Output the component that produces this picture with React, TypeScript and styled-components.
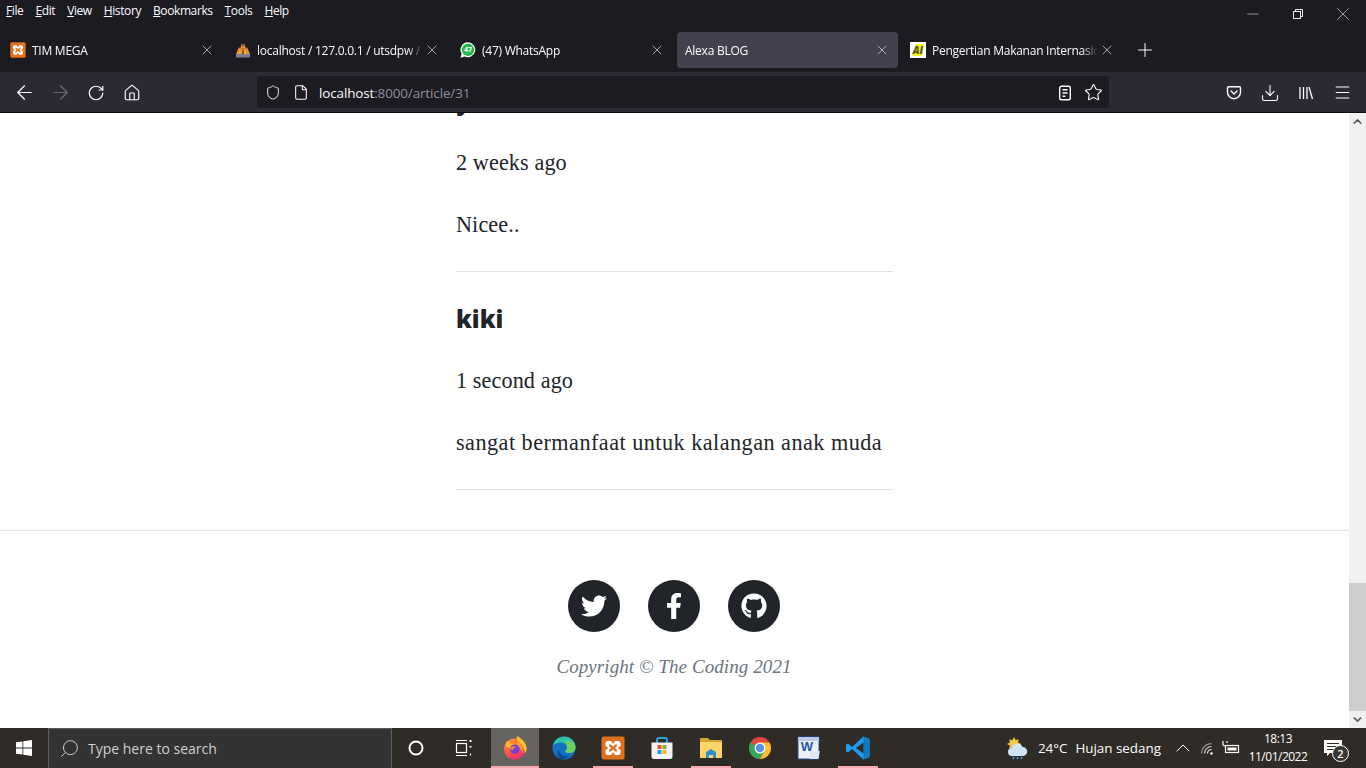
import React from "react";
import styled, { createGlobalStyle } from "styled-components";
import { ArrowLeft, ArrowRight, RotateCw, House, Shield, File, Star, Download, Menu, X, Plus, Minus, Search, ChevronUp, ChevronDown } from "lucide-react";
import { FaTwitter, FaFacebookF, FaGithub } from "react-icons/fa";

const Global = createGlobalStyle`
  html, body { margin: 0; padding: 0; width: 1366px; height: 768px; overflow: hidden; background: #fff; }
  * { box-sizing: border-box; }
`;

const Shell = styled.div`
  width: 1366px; height: 768px; display: flex; flex-direction: column; overflow: hidden;
  font-family: "Open Sans", "Noto Sans", sans-serif;
`;

/* ---------- browser chrome ---------- */
const TitleBar = styled.div`
  height: 32px; background: #1c1b22; color: #fbfbfe; display: flex; align-items: flex-start; flex: none;
`;
const MenuList = styled.div`
  display: flex; gap: 12px; padding: 2px 0 0 6px; font-size: 12px; line-height: 17px; letter-spacing: -0.4px;
`;
const MenuItem = styled.span`
  &::first-letter { text-decoration: underline; }
  display: inline-block;
`;
const WindowButtons = styled.div`
  margin-left: auto; display: flex; padding-top: 2px; padding-right: 1px;
`;
const WindowButton = styled.div`
  width: 45px; height: 24px; display: flex; align-items: center; justify-content: center; color: #e8e8ea;
`;
const TabBar = styled.div`
  height: 40px; background: #1c1b22; display: flex; align-items: flex-start; gap: 4px; padding-left: 2px; flex: none;
`;
const Tab = styled.div<{ $active?: boolean }>`
  width: 221px; height: 36px; display: flex; align-items: center; padding: 0 8px; border-radius: 4px;
  background: ${(p) => (p.$active ? "#42414d" : "transparent")};
  color: #fbfbfe; font-size: 12px; position: relative;
`;
const Favicon = styled.span`
  width: 16px; height: 16px; flex: none; margin-right: 6px; display: flex;
`;
const TabTitle = styled.span`
  flex: 1; min-width: 0; white-space: nowrap; overflow: hidden; letter-spacing: -0.25px;
  mask-image: linear-gradient(to right, #000 calc(100% - 16px), transparent);
`;
const TabClose = styled.span`
  width: 16px; height: 16px; flex: none; display: flex; align-items: center; justify-content: center; color: #e8e8ea; margin-left: 1px;
`;
const NewTab = styled.div`
  width: 36px; height: 36px; display: flex; align-items: center; justify-content: center; color: #fbfbfe;
`;
const NavBar = styled.div`
  height: 41px; background: #2b2a33; border-bottom: 1px solid #0c0c0d; display: flex; align-items: flex-start; padding: 4px 6px 0; flex: none;
`;
const NavButton = styled.div<{ $dim?: boolean }>`
  width: 36px; height: 32px; padding-top: 1px; display: flex; align-items: center; justify-content: center;
  color: ${(p) => (p.$dim ? "#6b6a72" : "#fbfbfe")};
`;
const NavGroup = styled.div`
  display: flex; flex: none;
`;
const AddressBar = styled.div`
  width: 852px; height: 32px; margin: 0 auto; padding: 1px 6px 0 8px; background: #1c1b22; border-radius: 4px; display: flex; align-items: center;
  color: #fbfbfe; font-size: 13.4px;
`;
const AddressIcon = styled.span`
  width: 16px; height: 20px; display: flex; flex: none; align-items: center; justify-content: center; margin-right: 12px;
  &:nth-child(2) { margin-right: 10px; }
`;
const Host = styled.span`
  color: #fbfbfe; letter-spacing: -0.1px;
`;
const UrlRest = styled.span`
  color: #8f8f9d; letter-spacing: -0.1px;
`;
const AddressEnd = styled.div`
  margin-left: auto; display: flex; gap: 11px; align-items: center;
`;

/* ---------- page ---------- */
const Viewport = styled.div`
  flex: 1; min-height: 0; display: flex; background: #fff; overflow: hidden;
`;
const Page = styled.div`
  flex: 1; min-width: 0; overflow: hidden; color: #212529;
  font-family: "Liberation Serif", "DejaVu Serif", serif;
`;
const Column = styled.div`
  width: 437px; margin: -27px auto 0;
`;
const Comment = styled.article`
  border-bottom: 1px solid #e1e2e3; margin-bottom: 32px;
  &:last-child { margin-bottom: 0; }
`;
const Author = styled.h3`
  margin: 0 0 31px; font-family: "Open Sans", sans-serif; font-weight: 800; font-size: 24px; line-height: 30px; color: #212529;
`;
const Line = styled.p<{ $tracking?: number }>`
  margin: 0 0 30px; font-size: 22.2px; line-height: 32px; letter-spacing: ${(p) => p.$tracking ?? 0.1}px;
`;
const Footer = styled.footer`
  margin-top: 40px; padding: 49px 1px 0 0; border-top: 1px solid #e1e2e3; display: flex; flex-direction: column; align-items: center;
`;
const Socials = styled.div`
  display: flex; gap: 28px;
`;
const Social = styled.div`
  width: 52px; height: 52px; border-radius: 50%; background: #212529; color: #fff; display: flex; align-items: center; justify-content: center; font-size: 26px;
`;
const Copyright = styled.div`
  margin-top: 19px; font-style: italic; font-size: 19px; line-height: 32px; color: #6c757d; letter-spacing: 0.08px;
`;
const Scrollbar = styled.div`
  width: 17px; flex: none; background: #f0f0f0; display: flex; flex-direction: column; color: #606060;
`;
const ScrollArrow = styled.div`
  height: 17px; flex: none; display: flex; align-items: center; justify-content: center;
`;
const ScrollTrack = styled.div`
  flex: 1; display: flex; flex-direction: column; justify-content: flex-end;
`;
const ScrollThumb = styled.div`
  height: 128px; background: #cdcdcd;
`;

/* ---------- taskbar ---------- */
const Taskbar = styled.div`
  height: 40px; flex: none; background: #2f2b26; display: flex; align-items: stretch; color: #fff; font-size: 14px;
`;
const Start = styled.div`
  width: 48px; display: flex; align-items: center; justify-content: center;
`;
const SearchBox = styled.div`
  width: 344px; background: #333333; border: 1px solid #5c5c5c; border-bottom: none; display: flex; align-items: center; padding-left: 10px; gap: 8px; color: #cfcfcf; font-size: 14px;
`;
const SearchGlass = styled(Search)`
  transform: scaleX(-1);
`;
const SystemCell = styled.div`
  width: 48px; display: flex; align-items: center; justify-content: center;
`;
const Apps = styled.div`
  display: flex; gap: 1px; margin-left: 3px;
`;
const AppCell = styled.div<{ $active?: boolean; $open?: boolean }>`
  width: 48px; display: flex; align-items: center; justify-content: center; position: relative;
  background: ${(p) => (p.$active ? "#666461" : "transparent")};
  &::after {
    content: ""; position: absolute; bottom: 0; height: 2px; background: #f5a8ae;
    left: ${(p) => (p.$active ? "0" : "4px")}; right: ${(p) => (p.$active ? "0" : "4px")};
    display: ${(p) => (p.$active || p.$open ? "block" : "none")};
  }
`;
const Tray = styled.div`
  margin-left: auto; padding-right: 11px; display: flex; align-items: center; font-size: 13.4px; color: #fff;
`;
const Weather = styled.div`
  display: flex; align-items: center; margin-right: 10px;
  svg { margin-right: 9px; }
`;
const WeatherTemp = styled.span`
  margin-right: 8px;
`;
const TrayIcon = styled.span`
  width: 24px; display: flex; align-items: center; justify-content: center;
`;
const Clock = styled.div`
  width: 62px; margin-left: 4px; text-align: center; font-size: 12px; line-height: 18px; letter-spacing: -0.5px;
`;
const Notify = styled.div`
  width: 44px; height: 40px; margin-left: 2px; display: flex; align-items: center; justify-content: center; position: relative;
`;
const NotifyBadge = styled.span`
  position: absolute; right: 6px; bottom: 6px; width: 17px; height: 17px; border-radius: 50%; background: #3a3631; border: 1px solid #fff;
  font-size: 11px; font-weight: 600; display: flex; align-items: center; justify-content: center; line-height: 1;
`;

/* ---------- drawn icons ---------- */
const XamppIcon = ({ size = 16 }: { size?: number }) => (
  <svg width={size} height={size} viewBox="0 0 24 24">
    <rect x="0.5" y="0.5" width="23" height="23" rx="2" fill="#e0721f" />
    <path d="M7 5h3l2 3 2-3h3a2.5 2.5 0 0 1 2.5 2.5V10l-3 2 3 2v2.5A2.5 2.5 0 0 1 17 19h-3l-2-3-2 3H7a2.5 2.5 0 0 1-2.5-2.5V14l3-2-3-2V7.500A2.500 2.500 0 0 1 7 5z" fill="#fff" />
    <path d="M8 8.500h2l2 2 2-2h2V10l-2 2 2 2v1.500h-2l-2-2-2 2H8V14l2-2-2-2z" fill="#e0721f" />
  </svg>
);
const PmaIcon = () => (
  <svg width="16" height="16" viewBox="0 0 16 16">
    <path d="M1 12 4 5l1 2 2-6 1 4 1-4 2 6 1-2 3 7z" fill="#e8912c" />
    <path d="M7.400 12 8 4l.6 8z" fill="#1c1b22" />
    <path d="M4 12 5 8l.6 4zM11 12l-1-4-.6 4z" fill="#f6c25a" />
    <rect x="1" y="12" width="14" height="3.500" fill="#7a7f96" />
  </svg>
);
const WhatsAppIcon = () => (
  <svg width="16" height="16" viewBox="0 0 16 16">
    <path d="M8 .3a7.500 7.500 0 0 0-6.400 11.400L.5 15.700l4.100-1.100A7.500 7.500 0 1 0 8 .3z" fill="#fff" />
    <circle cx="8" cy="7.800" r="6.200" fill="#25b84c" />
    <text x="8" y="10.300" textAnchor="middle" fontSize="7" fontWeight="700" fontFamily="Open Sans, sans-serif" fill="#fff">47</text>
  </svg>
);
const AiIcon = () => (
  <svg width="16" height="16" viewBox="0 0 16 16">
    <rect width="16" height="16" fill="#fff" />
    <path d="M2 14 6 2h8l-2 12z" fill="#f4f01c" />
    <text x="8" y="11.500" textAnchor="middle" fontSize="10" fontWeight="800" fontStyle="italic" fontFamily="Open Sans, sans-serif" fill="#5a5a20">AI</text>
  </svg>
);
const RestoreIcon = () => (
  <svg width="12" height="12" viewBox="0 0 12 12" fill="none" stroke="#e8e8ea" strokeWidth="1">
    <rect x="1.500" y="3.500" width="7" height="7" />
    <path d="M3.500 3.500v-2h7v7h-2" />
  </svg>
);
const ReaderIcon = () => (
  <svg width="16" height="16" viewBox="0 0 16 16" fill="none" stroke="#fbfbfe" strokeWidth="1.400">
    <rect x="2.700" y="1.200" width="10.600" height="13.600" rx="1.800" />
    <path d="M5.500 4.800h5M5.500 8h5M5.500 11.200h3" />
  </svg>
);
const PocketIcon = () => (
  <svg width="16" height="16" viewBox="0 0 16 16" fill="none" stroke="#fbfbfe" strokeWidth="1.400" strokeLinecap="round" strokeLinejoin="round">
    <path d="M2.700 1.700h10.600a1.200 1.200 0 0 1 1.200 1.200v4.300a6.500 6.500 0 0 1-13 0V2.900a1.200 1.200 0 0 1 1.200-1.200z" />
    <path d="M5 6l3 3 3-3" />
  </svg>
);
const LibraryIcon = () => (
  <svg width="16" height="16" viewBox="0 0 16 16" fill="none" stroke="#fbfbfe" strokeWidth="1.300">
    <path d="M2 2v12M5.500 2v12M9 2v12M11 2l3.500 12" />
  </svg>
);
const WindowsLogo = () => (
  <svg width="16" height="16" viewBox="0 0 16 16" fill="#fff">
    <path d="M0 2.300 6.500 1.400v6.200H0zM7.300 1.300 16 0v7.600H7.300zM0 8.400h6.500v6.200L0 13.700zM7.300 8.400H16V16l-8.700-1.300z" />
  </svg>
);
const TaskViewIcon = () => (
  <svg width="18" height="18" viewBox="0 0 18 18" fill="none" stroke="#fff" strokeWidth="1.200">
    <path d="M1 1.500h11M1 16.500h11" />
    <rect x="1.500" y="4.500" width="10" height="9" />
    <path d="M15.500 1v2M15.500 7v1.500" strokeWidth="2" />
    <path d="M15.500 14.500v2" strokeWidth="1.200" />
  </svg>
);
const FirefoxIcon = () => (
  <svg width="24" height="24" viewBox="0 0 24 24">
    <defs>
      <linearGradient id="ffA" x1="0.1" y1="0" x2="0.6" y2="1">
        <stop offset="0" stopColor="#ff9a2e" />
        <stop offset="0.55" stopColor="#ff5a3c" />
        <stop offset="1" stopColor="#f0307a" />
      </linearGradient>
    </defs>
    <circle cx="11.500" cy="13" r="10.500" fill="url(#ffA)" />
    <path d="M14 0c4.500 2.500 9.500 6.500 9.500 12.500 0 2-.5 3.500-1.500 5-.5-5.500-3-9.500-7-11.500-1.200-2-1.500-4-1-6z" fill="#ffc42e" />
    <path d="M14 6c4 1.500 6 5 6 8.500 0 1-.2 2-.5 2.800-1-4-2.500-6-6-7.500z" fill="#ff9d2a" />
    <path d="M3 6c2-1 4 0 5.500 1.500L12 7.500 12 9l-5 3-4-1z" fill="#ffb32e" />
    <circle cx="11.800" cy="13.200" r="4.800" fill="#7a3ed0" />
    <path d="M7 12.500c1.500-2 4-2.500 6.500-1.500-2 .2-3.500 1.500-3.500 3-1.300 0-2.500-.5-3-1.500z" fill="#ff8a2a" />
  </svg>
);
const EdgeIcon = () => (
  <svg width="24" height="24" viewBox="0 0 24 24">
    <circle cx="12" cy="12" r="11.500" fill="#1173c5" />
    <path d="M1 10C2 4 7 .5 12 .5c6 0 11.500 4.500 11.500 10.500 0 4-3 6-6 6-2.500 0-4.500-1-4.500-1.500 0-.5 2-1.500 2-4 0-3-3-5-6-5-4 0-7 1.500-8 3.500z" fill="#2fc4a8" />
    <path d="M13 5c5-1 10 1 10.500 6 0 4-3 6-6 6-2 0-3.500-.5-4.500-1.500 1-1 2-2 2-4 0-3-1-5-2-6.500z" fill="#6bd35f" />
    <path d="M7 13c0 4 3 7 8 7 1 0 2-.2 2.500-.5C15 22.500 12 23.500 9 23c-4-1-5-6-2-10z" fill="#0c4c94" />
  </svg>
);
const StoreIcon = () => (
  <svg width="24" height="24" viewBox="0 0 24 24">
    <path d="M7 7V4a2 2 0 0 1 2-2h6a2 2 0 0 1 2 2v3" fill="none" stroke="#2aa3dc" strokeWidth="2" />
    <path d="M1.500 6.500h21v14a2.500 2.500 0 0 1-2.500 2.500H4a2.500 2.500 0 0 1-2.500-2.500z" fill="#f4f4f4" />
    <rect x="7.500" y="9" width="4" height="4" fill="#e8502e" />
    <rect x="12.500" y="9" width="4" height="4" fill="#7cbc2a" />
    <rect x="7.500" y="14" width="4" height="4" fill="#1aa0e4" />
    <rect x="12.500" y="14" width="4" height="4" fill="#fbb81a" />
  </svg>
);
const FolderIcon = () => (
  <svg width="24" height="22" viewBox="0 0 24 22">
    <path d="M1 2a1 1 0 0 1 1-1h7l2 2h12v17a1 1 0 0 1-1 1H2a1 1 0 0 1-1-1z" fill="#d8a22e" />
    <path d="M1 5h22v15a1 1 0 0 1-1 1H2a1 1 0 0 1-1-1z" fill="#ffd667" />
    <path d="M7 21v-6l5-3 5 3v6h-3v-3h-4v3z" fill="#2f8fd0" />
  </svg>
);
const ChromeIcon = () => (
  <svg width="24" height="24" viewBox="0 0 24 24">
    <circle cx="12" cy="12" r="11" fill="#e8453c" />
    <path d="M12 12 2.500 6.500A11 11 0 0 0 12 23l5-9z" fill="#34a853" />
    <path d="M12 12l5 2-5 9a11 11 0 0 0 9.500-16.500H12z" fill="#fbc02d" />
    <circle cx="12" cy="12" r="5.500" fill="#fff" />
    <circle cx="12" cy="12" r="4.200" fill="#5c8fe8" />
  </svg>
);
const WordIcon = () => (
  <svg width="24" height="24" viewBox="0 0 24 24">
    <rect x="1" y="1" width="21" height="22" fill="#eef2f8" stroke="#1f4e9c" strokeWidth="1" />
    <rect x="1" y="1" width="21" height="4" fill="#b7c9e6" />
    <text x="10" y="15" textAnchor="middle" fontSize="13" fontWeight="800" fontFamily="Liberation Sans, sans-serif" fill="#1d55ad">W</text>
    <path d="M13 16l10-1-2 8H13z" fill="#e4e8ee" />
  </svg>
);
const VSCodeIcon = () => (
  <svg width="24" height="24" viewBox="0 0 24 24">
    <path d="M17.500 0.500 23.500 3v18l-6 2.500L6 13 2 16.500 0 15.500V8.500l2-1L6 11z" fill="#1f9cf0" />
    <path d="M17.500 .5 23.500 3v18l-6 2.500z" fill="#0e7ac4" />
    <path d="M17.500 6.500v11L10 12z" fill="#2f2b26" />
  </svg>
);
const WeatherIcon = () => (
  <svg width="24" height="24" viewBox="0 0 24 24">
    <path d="M9 1l1.500 3 3.200-.6-.6 3.200 3 1.500-3 1.500.6 3.200-3.200-.6L9 15l-1.500-2.800-3.200.6.600-3.200-3-1.500 3-1.500-.6-3.200 3.200.6z" fill="#f6c643" />
    <path d="M7 20a4 4 0 0 1 0-8 5.500 5.500 0 0 1 10.500-1A4.500 4.500 0 0 1 18 20z" fill="#cfe3f4" />
    <path d="M9 21l-1 2M13 21l-1 2M17 21l-1 2" stroke="#4da3e8" strokeWidth="1.500" />
  </svg>
);
const SignalIcon = () => (
  <svg width="16" height="16" viewBox="0 0 16 16" fill="none" stroke="#fff" strokeWidth="1.100">
    <circle cx="12.500" cy="13.500" r="1.200" fill="#fff" stroke="none" />
    <path d="M8.500 13.500a4 4 0 0 1 4-4" />
    <path d="M5.500 13.500a7 7 0 0 1 7-7" opacity="0.8" />
    <path d="M2.500 13.500a10 10 0 0 1 10-10" opacity="0.6" />
  </svg>
);
const BatteryIcon = () => (
  <svg width="18" height="16" viewBox="0 0 18 16" fill="none" stroke="#fff" strokeWidth="1.200">
    <rect x="3.500" y="5.500" width="13" height="7" />
    <rect x="5.500" y="7.500" width="9" height="3" fill="#fff" stroke="none" />
    <path d="M1 1v3a2 2 0 0 0 2 2M5 1v2" />
  </svg>
);
const NotifyIcon = () => (
  <svg width="18" height="17" viewBox="0 0 18 17">
    <path d="M0 0h18v13H6l-3 3v-3H0z" fill="#fff" />
    <path d="M3 3.500h12M3 6.500h12M3 9.500h8" stroke="#2f2b26" strokeWidth="1" />
  </svg>
);

const menus = ["File", "Edit", "View", "History", "Bookmarks", "Tools", "Help"];

const tabs: { title: string; icon?: React.ReactNode; active?: boolean }[] = [
  { title: "TIM MEGA", icon: <XamppIcon /> },
  { title: "localhost / 127.0.0.1 / utsdpw / article | phpMyAdmin", icon: <PmaIcon /> },
  { title: "(47) WhatsApp", icon: <WhatsAppIcon /> },
  { title: "Alexa BLOG", active: true },
  { title: "Pengertian Makanan Internasional", icon: <AiIcon /> },
];

const apps: { key: string; icon: React.ReactNode; active?: boolean; open?: boolean }[] = [
  { key: "firefox", icon: <FirefoxIcon />, active: true },
  { key: "edge", icon: <EdgeIcon /> },
  { key: "xampp", icon: <XamppIcon size={24} />, open: true },
  { key: "store", icon: <StoreIcon /> },
  { key: "explorer", icon: <FolderIcon />, open: true },
  { key: "chrome", icon: <ChromeIcon /> },
  { key: "word", icon: <WordIcon /> },
  { key: "vscode", icon: <VSCodeIcon />, open: true },
];

export default function App() {
  return (
    <Shell>
      <Global />
      <TitleBar>
        <MenuList>
          {menus.map((m) => (
            <MenuItem key={m}>{m}</MenuItem>
          ))}
        </MenuList>
        <WindowButtons>
          <WindowButton><Minus size={18} strokeWidth={0.8} /></WindowButton>
          <WindowButton><RestoreIcon /></WindowButton>
          <WindowButton><X size={22} strokeWidth={0.7} /></WindowButton>
        </WindowButtons>
      </TitleBar>
      <TabBar>
        {tabs.map((t) => (
          <Tab key={t.title} $active={t.active}>
            {t.icon && <Favicon>{t.icon}</Favicon>}
            <TabTitle>{t.title}</TabTitle>
            <TabClose><X size={18} strokeWidth={1} /></TabClose>
          </Tab>
        ))}
        <NewTab><Plus size={22} strokeWidth={1.1} /></NewTab>
      </TabBar>
      <NavBar>
        <NavGroup>
          <NavButton><ArrowLeft size={23} strokeWidth={1.3} /></NavButton>
          <NavButton $dim><ArrowRight size={23} strokeWidth={1.3} /></NavButton>
          <NavButton><RotateCw size={18} strokeWidth={1.6} /></NavButton>
          <NavButton><House size={18} strokeWidth={1.5} /></NavButton>
        </NavGroup>
        <AddressBar>
          <AddressIcon><Shield size={19} strokeWidth={1.4} /></AddressIcon>
          <AddressIcon><File size={17} strokeWidth={1.6} /></AddressIcon>
          <Host>localhost</Host>
          <UrlRest>:8000/article/31</UrlRest>
          <AddressEnd>
            <ReaderIcon />
            <Star size={19} strokeWidth={1.4} />
          </AddressEnd>
        </AddressBar>
        <NavGroup>
          <NavButton><PocketIcon /></NavButton>
          <NavButton><Download size={20} strokeWidth={1.3} /></NavButton>
          <NavButton><LibraryIcon /></NavButton>
          <NavButton><Menu size={19} strokeWidth={1.3} /></NavButton>
        </NavGroup>
      </NavBar>

      <Viewport>
        <Page>
          <Column>
            <Comment>
              <Author>y</Author>
              <Line>2 weeks ago</Line>
              <Line>Nicee..</Line>
            </Comment>
            <Comment>
              <Author>kiki</Author>
              <Line>1 second ago</Line>
              <Line $tracking={0.48}>sangat bermanfaat untuk kalangan anak muda</Line>
            </Comment>
          </Column>
          <Footer>
            <Socials>
              <Social><FaTwitter /></Social>
              <Social><FaFacebookF /></Social>
              <Social><FaGithub /></Social>
            </Socials>
            <Copyright>Copyright © The Coding 2021</Copyright>
          </Footer>
        </Page>
        <Scrollbar>
          <ScrollArrow><ChevronUp size={13} strokeWidth={3} /></ScrollArrow>
          <ScrollTrack><ScrollThumb /></ScrollTrack>
          <ScrollArrow><ChevronDown size={13} strokeWidth={3} /></ScrollArrow>
        </Scrollbar>
      </Viewport>

      <Taskbar>
        <Start><WindowsLogo /></Start>
        <SearchBox>
          <SearchGlass size={21} strokeWidth={1.1} />
          <span>Type here to search</span>
        </SearchBox>
        <SystemCell>
          <svg width="18" height="18" viewBox="0 0 18 18" fill="none" stroke="#fff" strokeWidth="2">
            <circle cx="9" cy="9" r="6.500" />
          </svg>
        </SystemCell>
        <SystemCell><TaskViewIcon /></SystemCell>
        <Apps>
          {apps.map((a) => (
            <AppCell key={a.key} $active={a.active} $open={a.open}>{a.icon}</AppCell>
          ))}
        </Apps>
        <Tray>
          <Weather>
            <WeatherIcon />
            <WeatherTemp>24°C</WeatherTemp>
            <span>Hujan sedang</span>
          </Weather>
          <TrayIcon><ChevronUp size={24} strokeWidth={1} /></TrayIcon>
          <TrayIcon><SignalIcon /></TrayIcon>
          <TrayIcon><BatteryIcon /></TrayIcon>
          <Clock>18:13<br />11/01/2022</Clock>
          <Notify>
            <NotifyIcon />
            <NotifyBadge>2</NotifyBadge>
          </Notify>
        </Tray>
      </Taskbar>
    </Shell>
  );
}
